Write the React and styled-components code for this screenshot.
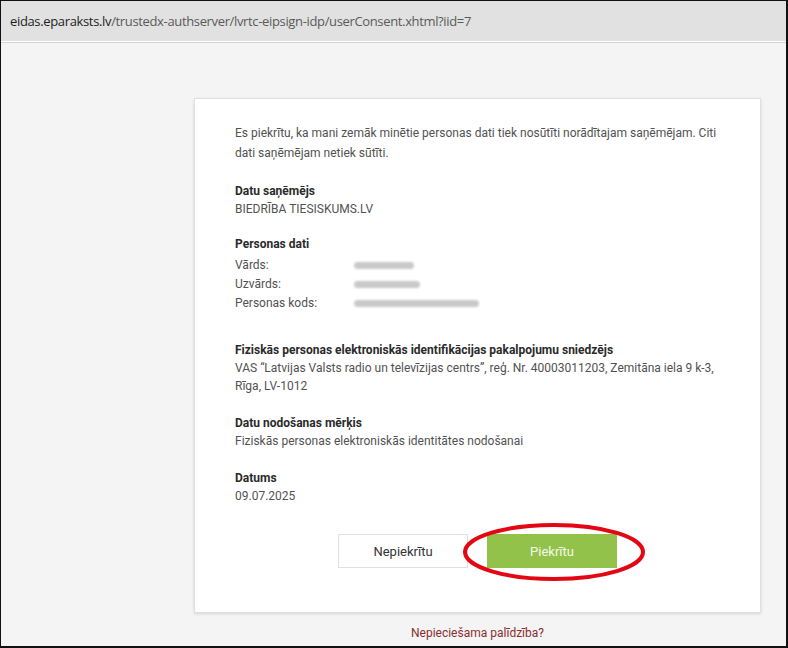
import React from "react";
import styled, { createGlobalStyle } from "styled-components";

const Global = createGlobalStyle`
  html, body { margin: 0; padding: 0; background: #fff; }
  body { font-family: Roboto, "Liberation Sans", Arial, sans-serif; }
  * { box-sizing: border-box; }
`;

const Frame = styled.div`
  width: 788px;
  height: 648px;
  border: 1px solid #111;
  border-right-width: 2px;
  border-bottom-width: 2px;
  display: flex;
  flex-direction: column;
  overflow: hidden;
  background: #f4f4f4;
`;

const AddressBar = styled.div`
  height: 41px;
  flex: none;
  background: #e1e1e1;
  border-bottom: 1px solid #fff;
  box-shadow: 0 1px 0 #d2d2d2;
  display: flex;
  align-items: center;
  padding-left: 9px;
  font-family: "Open Sans", "Noto Sans", sans-serif;
  font-size: 13px;
  letter-spacing: -0.35px;
  color: #5a5a5a;
  margin-bottom: 1px;
`;

const Host = styled.span`
  color: #1e1e1e;
`;

const Page = styled.div`
  flex: 1;
  display: flex;
  flex-direction: column;
  padding: 55px 0 0 193px;
`;

const Card = styled.div`
  width: 567px;
  height: 515px;
  background: #fff;
  border: 1px solid #e0e0e0;
  box-shadow: 0 1px 3px rgba(0, 0, 0, 0.12);
  padding: 24px 40px 0 40px;
  display: flex;
  flex-direction: column;
  font-size: 12px;
  color: #525252;
`;

const Intro = styled.p`
  margin: 0 0 19px 0;
  line-height: 20px;
`;

const Section = styled.div`
  margin-bottom: ${(p) => p.$gap ?? 17}px;
`;

const Heading = styled.div`
  font-weight: 700;
  color: #2a2a2a;
  line-height: 18px;
`;

const Text = styled.div`
  line-height: 18px;
`;

const Grid = styled.div`
  display: grid;
  grid-template-columns: 119px 1fr;
  row-gap: 1px;
  margin-top: 3px;
  line-height: 18px;
`;

const Blob = styled.span`
  display: inline-block;
  width: ${(p) => p.$w}px;
  height: 7px;
  margin-top: 6px;
  border-radius: 4px;
  background: #c9c9c9;
  filter: blur(1.2px);
`;

const Buttons = styled.div`
  display: flex;
  justify-content: center;
  gap: 19px;
  margin-top: 29px;
`;

const Button = styled.button`
  position: relative;
  width: 130px;
  height: 34px;
  font-family: Roboto, "Liberation Sans", Arial, sans-serif;
  font-size: 13px;
  cursor: pointer;
  border: 1px solid ${(p) => (p.$primary ? "#93c24b" : "#e0e0e0")};
  background: ${(p) => (p.$primary ? "#93c24b" : "#fff")};
  color: ${(p) => (p.$primary ? "#f4f9ea" : "#333")};
`;

const Mark = styled.svg`
  position: absolute;
  left: -25px;
  top: -13px;
  width: 182px;
  height: 60px;
  pointer-events: none;
  overflow: visible;
`;

const Help = styled.a`
  align-self: flex-start;
  width: 567px;
  text-align: center;
  margin-top: 13px;
  font-size: 12px;
  color: #8a2f2f;
  text-decoration: none;
`;

export default function App() {
  return (
    <>
      <Global />
      <Frame>
        <AddressBar>
          <Host>eidas.eparaksts.lv</Host>/trustedx-authserver/lvrtc-eipsign-idp/userConsent.xhtml?iid=7
        </AddressBar>
        <Page>
          <Card>
            <Intro>
              Es piekrītu, ka mani zemāk minētie personas dati tiek nosūtīti norādītajam saņēmējam. Citi
              dati saņēmējam netiek sūtīti.
            </Intro>
            <Section>
              <Heading>Datu saņēmējs</Heading>
              <Text>BIEDRĪBA TIESISKUMS.LV</Text>
            </Section>
            <Section $gap={29}>
              <Heading>Personas dati</Heading>
              <Grid>
                <span>Vārds:</span>
                <span><Blob $w={60} /></span>
                <span>Uzvārds:</span>
                <span><Blob $w={66} /></span>
                <span>Personas kods:</span>
                <span><Blob $w={125} /></span>
              </Grid>
            </Section>
            <Section $gap={19}>
              <Heading>Fiziskās personas elektroniskās identifikācijas pakalpojumu sniedzējs</Heading>
              <Text>
                VAS “Latvijas Valsts radio un televīzijas centrs”, reģ. Nr. 40003011203, Zemitāna iela 9 k-3,
                <br />
                Rīga, LV-1012
              </Text>
            </Section>
            <Section $gap={19}>
              <Heading>Datu nodošanas mērķis</Heading>
              <Text>Fiziskās personas elektroniskās identitātes nodošanai</Text>
            </Section>
            <Section $gap={0}>
              <Heading>Datums</Heading>
              <Text>09.07.2025</Text>
            </Section>
            <Buttons>
              <Button>Nepiekrītu</Button>
              <Button $primary>
                Piekrītu
                <Mark viewBox="0 0 182 60">
                  <ellipse cx="91" cy="30" rx="89" ry="27" fill="none" stroke="#e30613" strokeWidth="4" />
                </Mark>
              </Button>
            </Buttons>
          </Card>
          <Help href="#">Nepieciešama palīdzība?</Help>
        </Page>
      </Frame>
    </>
  );
}
